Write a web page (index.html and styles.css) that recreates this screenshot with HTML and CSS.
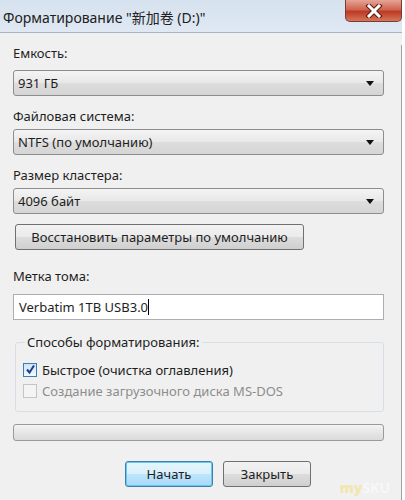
FILE: index.html
```html
<!DOCTYPE html>
<html lang="ru">

<head>
  <meta charset="UTF-8">
  <meta name="viewport" content="width=device-width, initial-scale=1.0">
  <title>Форматирование</title>

  <link rel="stylesheet" href="styles.css">
</head>

<body>
  <div id="window">
    <div class="titlebar">
      <span class="title">Форматирование "新加卷 (D:)"</span>
      <span class="close">
        <svg width="20" height="14" viewBox="0 0 20 14">
          <path d="M5 2 L15 12 M15 2 L5 12" stroke="#5a1a10" stroke-width="5" stroke-linecap="square"/>
          <path d="M5 2 L15 12 M15 2 L5 12" stroke="#fff" stroke-width="3" stroke-linecap="square"/>
        </svg>
      </span>
    </div>

    <div class="content">
      <div class="label first">Емкость:</div>
      <div class="combo"><span>931 ГБ</span><i class="arrow"></i></div>

      <div class="label">Файловая система:</div>
      <div class="combo"><span>NTFS (по умолчанию)</span><i class="arrow"></i></div>

      <div class="label">Размер кластера:</div>
      <div class="combo"><span>4096 байт</span><i class="arrow"></i></div>

      <div class="btn restore">Восстановить параметры по умолчанию</div>

      <div class="label volume">Метка тома:</div>
      <div class="textbox">Verbatim 1TB USB3.0<i class="caret"></i></div>

      <fieldset class="group">
        <legend>Способы форматирования:</legend>
        <div class="check">
          <span class="box checked">
            <svg width="11" height="11" viewBox="0 0 11 11">
              <path d="M2 5.5 L4.5 8.5 L9 1.5" fill="none" stroke="#1c3f8f" stroke-width="2"/>
            </svg>
          </span>
          Быстрое (очистка оглавления)
        </div>
        <div class="check disabled">
          <span class="box"></span>
          Создание загрузочного диска MS-DOS
        </div>
      </fieldset>

      <div class="progress"></div>

      <div class="actions">
        <div class="btn primary">Начать</div>
        <div class="btn">Закрыть</div>
      </div>
    </div>
    <span class="watermark"><b>my</b>SKU</span>
  </div>
</body>

</html>
```

FILE: styles.css
```css
body {
  margin: 0;
  background: #fff;
  font-family: "Noto Sans", "Noto Sans CJK SC", sans-serif;
  font-size: 13px;
  color: #1e1e1e;
}
#window {
  width: 402px;
  height: 500px;
  position: relative;
  background: #f0f0f0;
}
.titlebar {
  height: 32px;
  display: flex;
  justify-content: space-between;
  align-items: flex-start;
  background: linear-gradient(#d6e2ef, #dfe8f3);
  border-bottom: 1px solid #a9b4c0;
}
.title {
  padding: 7px 0 0 3px;
  font-size: 14px;
  color: #202020;
}
.close {
  width: 55px;
  height: 21px;
  display: flex;
  align-items: center;
  justify-content: center;
  background: linear-gradient(#e6a597, #cf6550 45%, #bd3a23 55%, #d5765c);
  border: 1px solid #7a3b32;
  border-top: none;
  border-radius: 0 0 5px 5px;
}
.content {
  border-right: 1px solid #a0a0a0;
  padding: 0 17px 0 13px;
  height: 467px;
}
.label {
  height: 16px;
  line-height: 16px;
  margin: 12px 0 5px;
}
.label.first {
  margin-top: 12px;
  margin-bottom: 9px;
}
.combo {
  height: 24px;
  border: 1px solid #8d8d8d;
  border-radius: 3px;
  background: linear-gradient(#f4f4f4, #e8e8e8 50%, #dddddd 51%, #d5d5d5);
  display: flex;
  align-items: center;
  justify-content: space-between;
  padding: 0 9px 0 4px;
}
.arrow {
  width: 0;
  height: 0;
  border-left: 4px solid transparent;
  border-right: 4px solid transparent;
  border-top: 5px solid #111;
}
.btn {
  height: 24px;
  border: 1px solid #707070;
  border-radius: 3px;
  background: linear-gradient(#f2f2f2, #ebebeb 50%, #dddddd 51%, #cfcfcf);
  display: flex;
  align-items: center;
  justify-content: center;
}
.restore {
  width: 287px;
  margin: 10px 0 0 2px;
}
.label.volume {
  margin-top: 18px;
  margin-bottom: 10px;
}
.textbox {
  height: 24px;
  line-height: 24px;
  border: 1px solid #abadb3;
  background: #fff;
  padding: 0 5px;
}
.caret {
  display: inline-block;
  width: 1px;
  height: 16px;
  background: #000;
  vertical-align: -3px;
}
.group {
  margin: 13px 0 0 2px;
  padding: 8px 8px 10px 7px;
  border: 1px solid #d5dfe5;
  border-radius: 3px;
  width: 352px;
}
.group legend {
  padding: 0 2px;
  margin-left: 2px;
}
.check {
  display: flex;
  align-items: center;
  gap: 5px;
  height: 21px;
}
.check.disabled {
  color: #8d8d8d;
}
.box {
  width: 12px;
  height: 12px;
  border: 1px solid #8e8f8f;
  background: linear-gradient(#dcdcdc, #fbfbfb);
  display: flex;
  align-items: center;
  justify-content: center;
}
.box.checked {
  background: linear-gradient(#cde4f6, #f2f8fc);
  border-color: #3c7fb1;
}
.check.disabled .box {
  border-color: #c5c5c5;
  background: #f4f4f4;
}
.progress {
  height: 15px;
  margin-top: 12px;
  border: 1px solid #9a9a9a;
  border-radius: 3px;
  background: linear-gradient(#f3f3f3, #e6e6e6 50%, #dadada);
}
.actions {
  display: flex;
  gap: 10px;
  margin: 20px 0 0 112px;
}
.actions .btn {
  width: 86px;
}
.actions .btn.primary {
  border-color: #3c7fb1;
  box-shadow: inset 0 0 0 1px #6ac8ee;
  background: linear-gradient(#e5f5fc, #d9f0fb 50%, #bee6fd 51%, #a7d9f5);
}
.watermark {
  position: absolute;
  right: 12px;
  bottom: 3px;
  font-size: 14px;
  font-weight: bold;
  color: #fff;
  opacity: 0.5;
}
.watermark b {
  color: #f3e06a;
}
```
